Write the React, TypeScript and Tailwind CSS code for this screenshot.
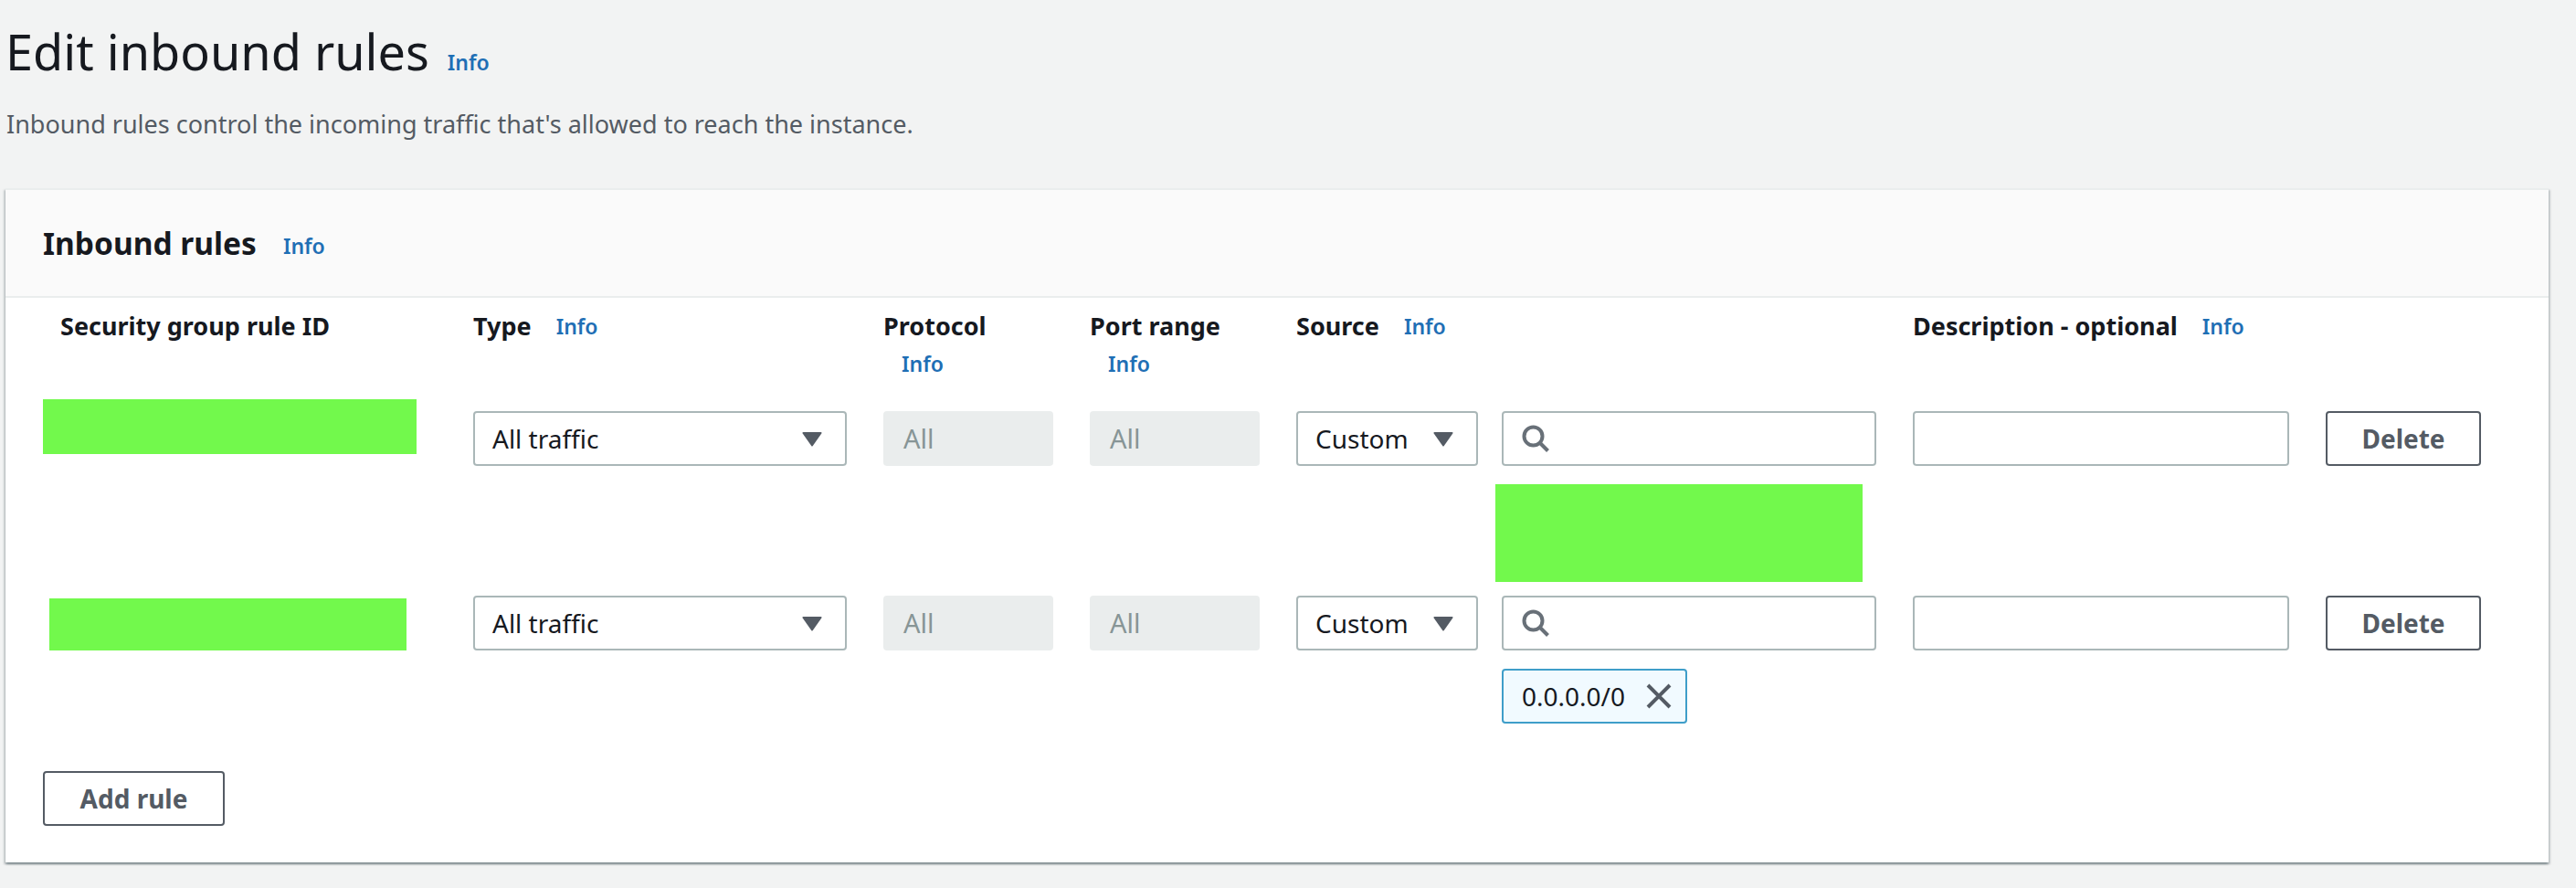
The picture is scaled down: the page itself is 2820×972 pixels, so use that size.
const FONT = "[font-family:'Noto_Sans',sans-serif]";
const GRID = 'grid grid-cols-[431px_409px_186px_186px_635px_412px_172px] gap-x-[40px]';

function InfoLink({ className = '' }: { className?: string }) {
  return <span className={`text-[23px] leading-[30px] font-semibold text-[#1f6fb5] ${className}`}>Info</span>;
}

function ColumnHeader({ label, info = 'inline', indent = '' }: { label: string; info?: 'inline' | 'below' | 'none'; indent?: string }) {
  if (info === 'below') {
    return (
      <div className="flex flex-col items-start">
        <span className="text-[27px] leading-[40px] font-bold text-[#16191f]">{label}</span>
        <InfoLink className="mt-[6px] ml-[20px]" />
      </div>
    );
  }
  return (
    <div className={`flex h-[40px] items-center gap-[27px] ${indent}`}>
      <span className="text-[27px] leading-[40px] font-bold text-[#16191f]">{label}</span>
      {info === 'inline' && <InfoLink />}
    </div>
  );
}

function Caret() {
  return (
    <svg width="22" height="17" viewBox="0 0 22 17" className="shrink-0">
      <path d="M1.5 1h19a1 1 0 0 1 .8 1.5l-9.5 13.5a1 1 0 0 1-1.6 0L.7 2.5A1 1 0 0 1 1.5 1z" fill="#545b64" />
    </svg>
  );
}

function Select({ value, className = '' }: { value: string; className?: string }) {
  return (
    <div className={`flex h-[60px] items-center justify-between rounded-[4px] border-2 border-[#aab7b8] bg-white pr-[25px] pl-[19px] ${className}`}>
      <span className="text-[28px] text-[#16191f]">{value}</span>
      <Caret />
    </div>
  );
}

function SearchIcon() {
  return (
    <svg width="30" height="30" viewBox="0 0 30 30" fill="none" stroke="#687078" strokeWidth="4">
      <circle cx="12.5" cy="12.5" r="10" />
      <path d="M19.5 19.5 L28.5 28.5" />
    </svg>
  );
}

function CloseIcon() {
  return (
    <svg width="28" height="28" viewBox="0 0 28 28" fill="none" stroke="#545b64" strokeWidth="4">
      <path d="M2 2 L26 26 M26 2 L2 26" />
    </svg>
  );
}

function OutlineButton({ label, className = '' }: { label: string; className?: string }) {
  return (
    <button
      type="button"
      className={`flex h-[60px] items-center justify-center rounded-[4px] border-2 border-[#545b64] bg-white text-[28px] font-bold text-[#545b64] ${className}`}
    >
      {label}
    </button>
  );
}

function Redacted({ className }: { className: string }) {
  return <div className={`bg-[#72f94c] ${className}`} />;
}

function DisabledField() {
  return (
    <div className="flex h-[60px] items-center rounded-[4px] bg-[#eaeded] pl-[22px] text-[29px] text-[#879596]">All</div>
  );
}

function Row({ idBlock, below, topPad }: { idBlock: React.ReactNode; below: React.ReactNode; topPad: string }) {
  return (
    <div className={GRID}>
      <div>{idBlock}</div>
      <div className={topPad}>
        <Select value="All traffic" />
      </div>
      <div className={topPad}>
        <DisabledField />
      </div>
      <div className={topPad}>
        <DisabledField />
      </div>
      <div className={`flex gap-[26px] ${topPad}`}>
        <Select value="Custom" className="w-[199px] shrink-0" />
        <div className="flex-1">
          <div className="flex h-[60px] items-center rounded-[4px] border-2 border-[#aab7b8] bg-white pl-[20px]">
            <SearchIcon />
          </div>
          {below}
        </div>
      </div>
      <div className={topPad}>
        <div className="h-[60px] rounded-[4px] border-2 border-[#aab7b8] bg-white" />
      </div>
      <div className={topPad}>
        <OutlineButton label="Delete" className="w-[170px]" />
      </div>
    </div>
  );
}

export default function App() {
  return (
    <div className={`h-[972px] w-[2820px] overflow-hidden bg-[#f2f3f3] ${FONT}`}>
      <div className="flex items-baseline gap-[20px] pt-[21px] pl-[6px]">
        <h1 className="text-[54px] leading-[70px] font-normal text-[#16191f]">Edit inbound rules</h1>
        <InfoLink />
      </div>
      <p className="mt-[25px] pl-[7px] text-[27px] leading-[40px] text-[#545b64]">
        Inbound rules control the incoming traffic that's allowed to reach the instance.
      </p>

      <section className="mt-[50px] ml-[6px] w-[2784px] border-t-2 border-[#eaeded] bg-white shadow-[0_2px_2px_0_rgba(0,28,36,0.3),2px_2px_2px_0_rgba(0,28,36,0.15),-2px_2px_2px_0_rgba(0,28,36,0.15)]">
        <div className="flex h-[118px] items-center gap-[29px] border-b-2 border-[#eaeded] bg-[#fafafa] pl-[41px]">
          <h2 className="text-[33.5px] font-bold text-[#16191f]">Inbound rules</h2>
          <InfoLink className="mt-[6px]" />
        </div>

        <div className="pt-[11px] pr-[40px] pb-[40px] pl-[41px]">
          <div className={`${GRID} h-[100px] items-start`}>
            <ColumnHeader label="Security group rule ID" info="none" indent="pl-[19px]" />
            <ColumnHeader label="Type" />
            <ColumnHeader label="Protocol" info="below" />
            <ColumnHeader label="Port range" info="below" />
            <ColumnHeader label="Source" />
            <ColumnHeader label="Description - optional" />
          </div>

          <Row
            topPad="pt-[13px]"
            idBlock={<Redacted className="h-[60px] w-[409px]" />}
            below={<div className="mt-[20px] mb-[1px] ml-[-7px] h-[107px] w-[402px] bg-[#72f94c]" />}
          />
          <div className="mt-[14px]">
            <Row
              topPad=""
              idBlock={<Redacted className="mt-[3px] ml-[7px] h-[57px] w-[391px]" />}
              below={
                <div className="mt-[20px] flex h-[60px] w-[203px] items-center gap-[23px] rounded-[4px] border-2 border-[#3f9ec9] bg-[#f1faff] pl-[20px]">
                  <span className="text-[28px] text-[#16191f]">0.0.0.0/0</span>
                  <CloseIcon />
                </div>
              }
            />
          </div>

          <OutlineButton label="Add rule" className="mt-[52px] w-[199px]" />
        </div>
      </section>
    </div>
  );
}
